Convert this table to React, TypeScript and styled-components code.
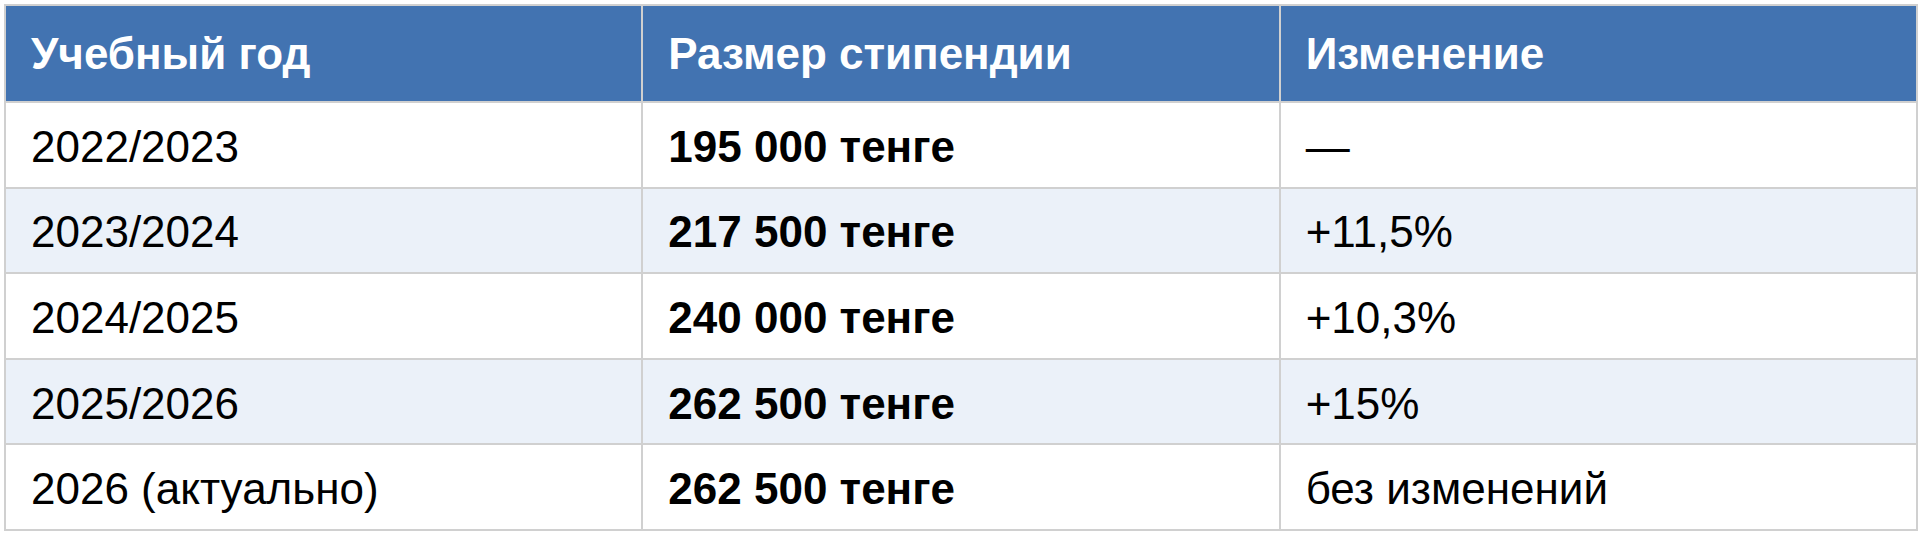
import React from 'react'
import styled, { createGlobalStyle } from 'styled-components'

const GlobalStyle = createGlobalStyle`
	html, body {
		margin: 0;
		padding: 0;
		background: #ffffff;
	}
	body {
		font-family: "Liberation Sans", Arial, Helvetica, sans-serif;
	}
`

const Page = styled.div`
	padding: 4px;
	box-sizing: border-box;
	width: 1928px;
`

const Table = styled.table`
	width: 1914px;
	table-layout: fixed;
	border-collapse: collapse;
	border: 2px solid #d0d0d0;
	font-size: 44px;
	color: #000;
`

const HeadCell = styled.th`
	height: 95px;
	padding: 0 25px;
	background: #4273b1;
	color: #fff;
	font-weight: 700;
	text-align: left;
	vertical-align: middle;
	border: 2px solid #d0d0d0;
`

const Row = styled.tr<{ $striped?: boolean }>`
	background: ${p => (p.$striped ? '#ebf1f9' : '#ffffff')};
`

const Cell = styled.td<{ $bold?: boolean }>`
	height: 85.6px;
	padding: 4px 25px 0;
	box-sizing: border-box;
	font-weight: ${p => (p.$bold ? 700 : 400)};
	vertical-align: middle;
	border: 2px solid #d0d0d0;
`

const rows = [
	{ year: '2022/2023', amount: '195 000 тенге', change: '—' },
	{ year: '2023/2024', amount: '217 500 тенге', change: '+11,5%' },
	{ year: '2024/2025', amount: '240 000 тенге', change: '+10,3%' },
	{ year: '2025/2026', amount: '262 500 тенге', change: '+15%' },
	{ year: '2026 (актуально)', amount: '262 500 тенге', change: 'без изменений' },
]

export default function App() {
	return (
		<>
			<GlobalStyle />
			<Page>
				<Table>
					<thead>
						<tr>
							<HeadCell>Учебный год</HeadCell>
							<HeadCell>Размер стипендии</HeadCell>
							<HeadCell>Изменение</HeadCell>
						</tr>
					</thead>
					<tbody>
						{rows.map((r, i) => (
							<Row key={r.year} $striped={i % 2 === 1}>
								<Cell>{r.year}</Cell>
								<Cell $bold>{r.amount}</Cell>
								<Cell>{r.change}</Cell>
							</Row>
						))}
					</tbody>
				</Table>
			</Page>
		</>
	)
}
